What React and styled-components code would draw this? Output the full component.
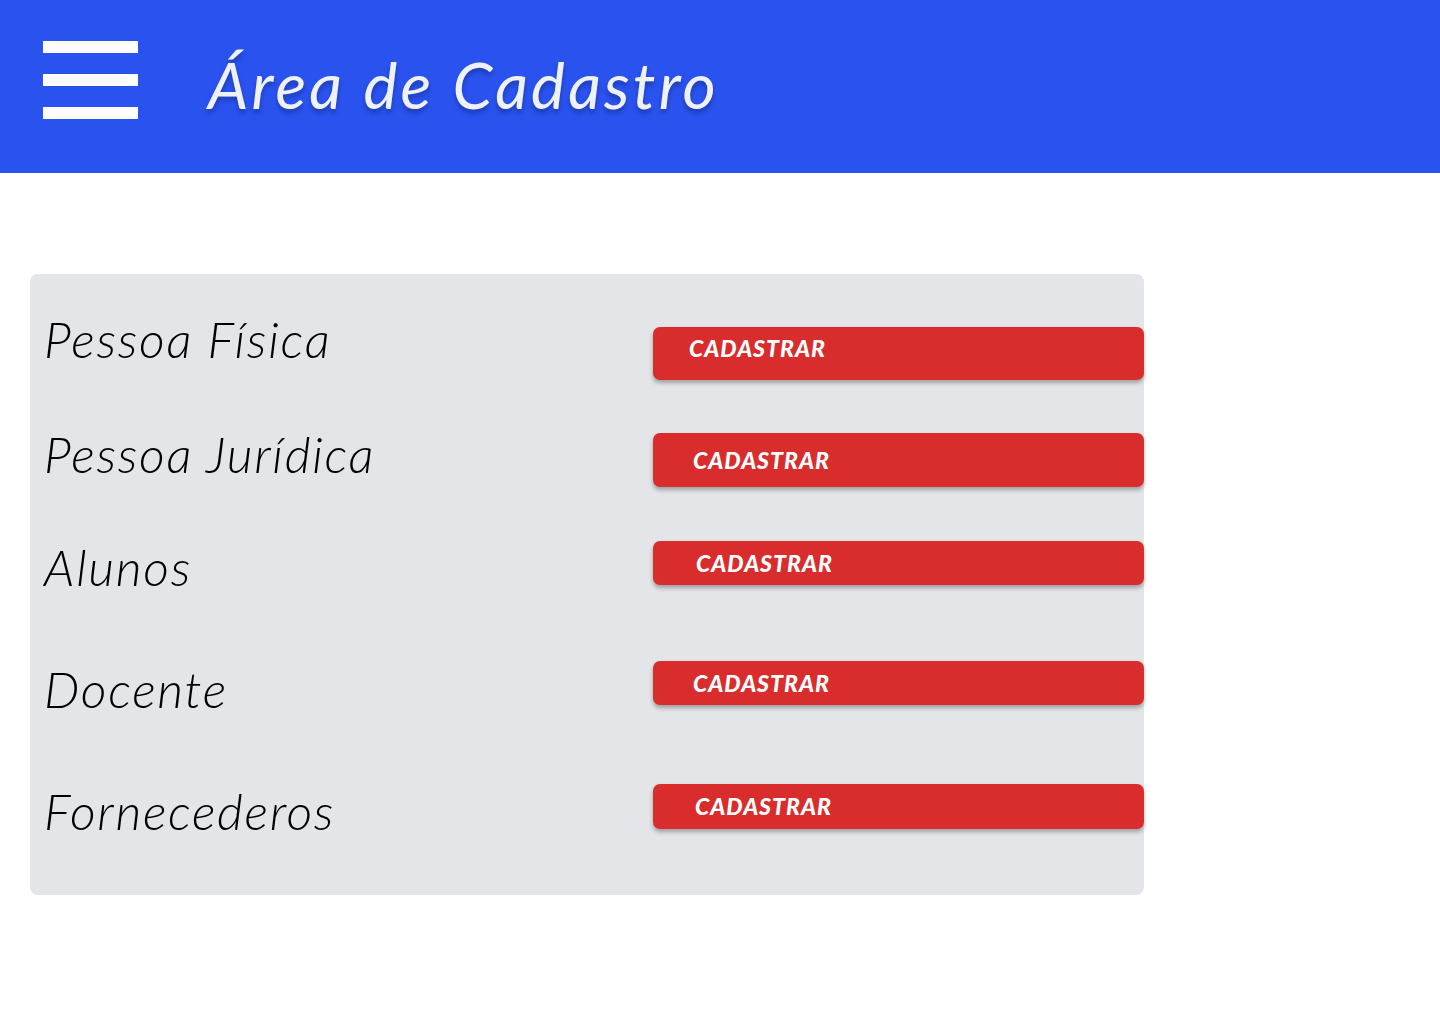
import styled, { createGlobalStyle } from 'styled-components';

const GlobalStyle = createGlobalStyle`
  body {
    margin: 0;
    background: #ffffff;
    font-family: 'Lato', 'Open Sans', sans-serif;
  }
`;

const rows = [
  { id: 1, name: 'Pessoa Física', height: 136, labelTop: 40, btnTop: 53, btnHeight: 53, btnPad: 36, $alignTop: true },
  { id: 2, name: 'Pessoa Jurídica', height: 110, labelTop: 19, btnTop: 23, btnHeight: 54, btnPad: 40 },
  { id: 3, name: 'Alunos', height: 120, labelTop: 22, btnTop: 21, btnHeight: 44, btnPad: 43 },
  { id: 4, name: 'Docente', height: 120, labelTop: 24, btnTop: 21, btnHeight: 44, btnPad: 40 },
  { id: 5, name: 'Fornecederos', height: 135, labelTop: 26, btnTop: 24, btnHeight: 45, btnPad: 42 },
];

const App = () => {
  return (
    <>
      <GlobalStyle />
      <Header>
        <Menu aria-label='menu'>
          <Bar />
          <Bar />
          <Bar />
        </Menu>
        <Title>Área de Cadastro</Title>
      </Header>
      <Card>
        {rows.map((row) => (
          <Row key={row.id} $height={row.height}>
            <Label $top={row.labelTop}>{row.name}</Label>
            <Button
              $top={row.btnTop}
              $height={row.btnHeight}
              $pad={row.btnPad}
              $alignTop={row.$alignTop}
            >
              CADASTRAR
            </Button>
          </Row>
        ))}
      </Card>
    </>
  );
};

export default App;

const Header = styled.header`
  display: flex;
  align-items: flex-start;
  height: 173px;
  box-sizing: border-box;
  padding: 41px 0 0 43px;
  background: #2952ef;
`;

const Menu = styled.button`
  display: flex;
  flex-direction: column;
  gap: 21px;
  padding: 0;
  border: none;
  background: none;
  cursor: pointer;
`;

const Bar = styled.span`
  display: block;
  width: 95px;
  height: 12px;
  background: #ffffff;
`;

const Title = styled.h1`
  margin: 12px 0 0 70px;
  font-family: 'Lato', sans-serif;
  font-style: italic;
  font-weight: 400;
  font-size: 64px;
  line-height: 1;
  letter-spacing: 3.2px;
  color: #eef2f6;
  text-shadow: 0 4px 4px rgba(0, 0, 0, 0.25);
`;

const Card = styled.section`
  display: flex;
  flex-direction: column;
  width: 1114px;
  margin: 101px 0 0 30px;
  background: #e4e5e9;
  border-radius: 8px;
`;

const Row = styled.div`
  display: flex;
  justify-content: space-between;
  align-items: flex-start;
  height: ${(p) => p.$height}px;
  padding-left: 14px;
`;

const Label = styled.h2`
  margin: ${(p) => p.$top}px 0 0;
  font-family: 'Lato', sans-serif;
  font-style: italic;
  font-weight: 300;
  font-size: 50px;
  line-height: 1;
  letter-spacing: 1.7px;
  color: #000000;
`;

const Button = styled.button`
  display: flex;
  align-items: ${(p) => (p.$alignTop ? 'flex-start' : 'center')};
  width: 491px;
  height: ${(p) => p.$height}px;
  margin-top: ${(p) => p.$top}px;
  padding: ${(p) => (p.$alignTop ? '10px' : '0')} 0 0 ${(p) => p.$pad}px;
  box-sizing: border-box;
  border: none;
  border-radius: 7px;
  background: #d92d2d;
  box-shadow: 0 3px 4px rgba(0, 0, 0, 0.3);
  font-family: 'Lato', sans-serif;
  font-style: italic;
  font-weight: 900;
  font-size: 23px;
  line-height: 1;
  letter-spacing: 1px;
  color: #ffffff;
  cursor: pointer;
`;
